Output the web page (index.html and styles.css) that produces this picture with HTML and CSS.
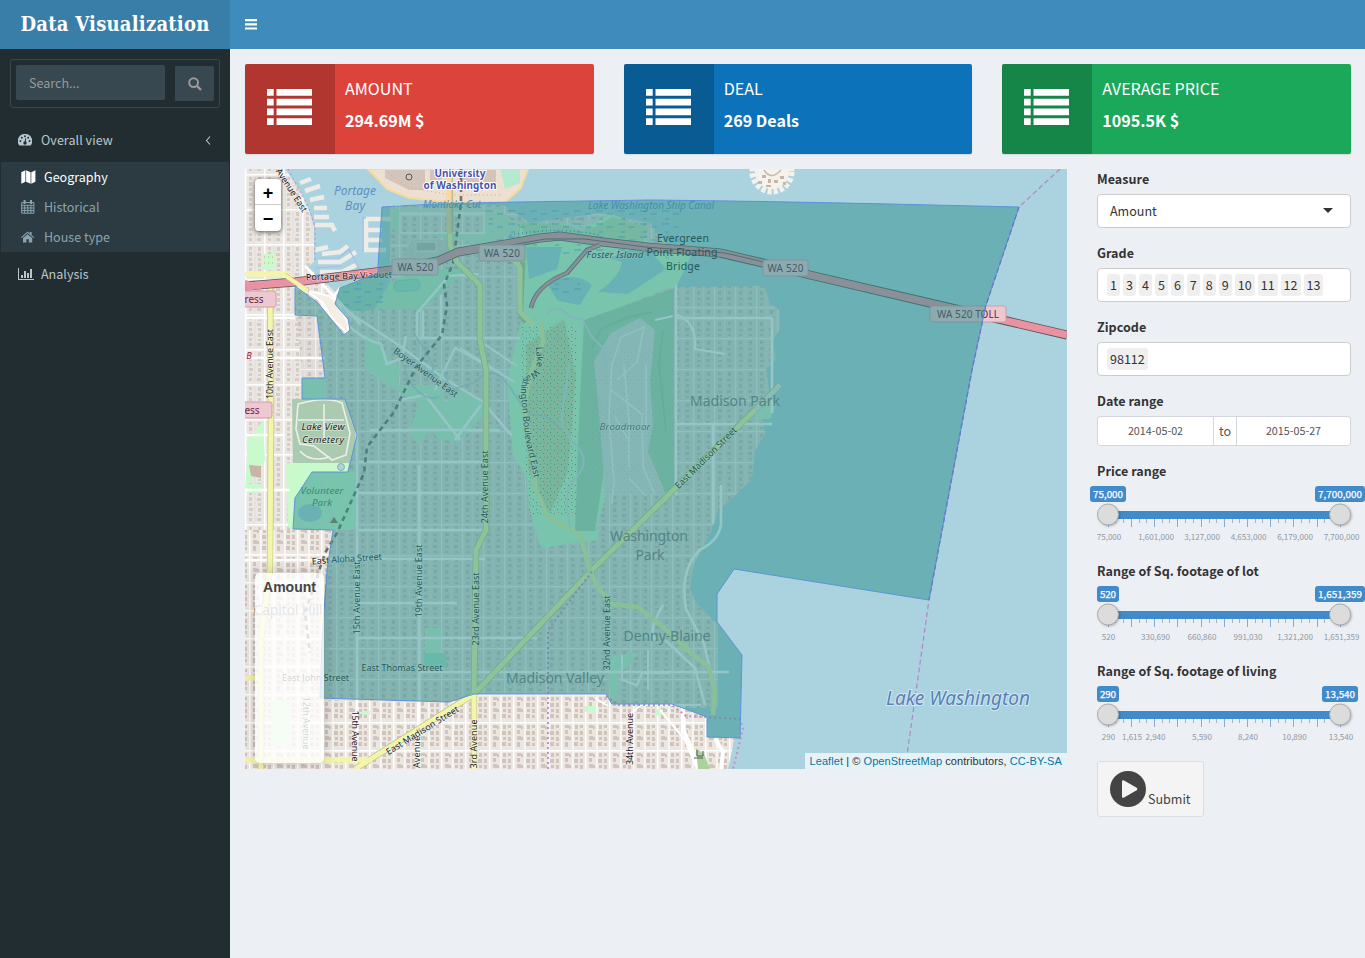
FILE: index.html
```html
<!DOCTYPE html>
<html lang="en">
<head>
<meta charset="utf-8">
<title>Data Visualization</title>
<link rel="stylesheet" href="styles.css">
</head>
<body>
<header class="header">
  <div class="logo">Data Visualization</div>
  <div class="navbar"><svg width="12" height="11" viewBox="0 0 12 11"><path d="M0 0h12v2.2H0zM0 4.2h12v2.2H0zM0 8.4h12v2.2H0z" fill="#fff"/></svg></div>
</header>
<div class="wrapper">
  <aside class="sidebar">
    <form class="search">
      <div class="search-input">Search...</div>
      <div class="search-btn"><svg width="14" height="14" viewBox="0 0 14 14" fill="none" stroke="#999" stroke-width="2"><circle cx="5.6" cy="5.6" r="4.4"/><path d="M9 9l4 4" stroke-width="2.4"/></svg></div>
    </form>
    <nav class="menu">
      <div class="item"><svg width="14" height="12" viewBox="0 0 14 12"><path d="M7 0a7 7 0 0 0-6 11q.3.6.8.6h10.4q.5 0 .8-.6A7 7 0 0 0 7 0z" fill="#b8c7ce"/><g fill="#222d32"><circle cx="2.4" cy="7" r=".95"/><circle cx="3.8" cy="3.7" r=".95"/><circle cx="7" cy="2.3" r=".95"/><circle cx="10.2" cy="3.7" r=".95"/><circle cx="11.6" cy="7" r=".95"/><circle cx="7" cy="9" r="1.7"/><path d="M6.4 9l1-5 .8.2-.6 5z"/></g></svg><span class="wide">Overall view</span><svg class="angle" width="6" height="9" viewBox="0 0 6 9"><path d="M5 .5L1.500 4.500 5 8.500" fill="none" stroke="#b8c7ce" stroke-width="1.1"/></svg></div>
      <div class="submenu">
        <div class="item active"><svg width="15" height="14" viewBox="0 0 15 14" fill="#fff"><path d="M.3 2.2L4.4.3v11.4L.3 13.7zM5.1.3l4.5 2v11.4l-4.5-2zM10.3 2.3L14.4.2v11.5l-4.1 2z"/></svg><span>Geography</span></div>
        <div class="item"><svg width="14" height="14" viewBox="0 0 14 14" fill="none" stroke="#8aa4af"><path d="M.7 2.5h12.2v10.7H.7zM.7 5.3h12.2M.7 8h12.2M.7 10.6h12.2M3.7 5v8M6.8 5v8M9.9 5v8"/><path d="M3.6 0v4M10 0v4" stroke-width="2"/></svg><span>Historical</span></div>
        <div class="item"><svg width="14" height="12" viewBox="0 0 14 12" fill="#8aa4af"><path d="M0 6.3L6.6.6l2.2 1.8V1h1.8v3l2.7 2.3-.7.8-6-5-5.9 5z"/><path d="M2 7l4.6-3.8L11.2 7v4.5H7.8V8.2H5.4v3.3H2z"/></svg><span>House type</span></div>
      </div>
      <div class="item tight"><svg width="16" height="12" viewBox="0 0 16 12" fill="#b8c7ce"><path d="M0 0h1v11h15v1H0zM3 7h2v3H3zM6 3h2v7H6zM9 5h2v5H9zM12 1h2v9h-2z"/></svg><span>Analysis</span></div>
    </nav>
  </aside>
  <main class="content">
    <svg class="defs" width="0" height="0">
      <symbol id="list" viewBox="0 0 45 36"><g fill="#fff"><path d="M0 0h6.7v6.8H0zM0 9.8h6.7v6.8H0zM0 19.5h6.7v6.8H0zM0 29.2h6.7V36H0zM9.5 0H45v6.8H9.5zM9.5 9.8H45v6.8H9.5zM9.5 19.5H45v6.8H9.5zM9.5 29.2H45V36H9.5z"/></g></symbol>
      <g id="track">
        <path d="M18.5 33v4M26.5 33v4M42.5 33v4M49.5 33v4M65.5 33v4M72.5 33v4M88.5 33v4M96.5 33v4M112.5 33v4M119.5 33v4M135.5 33v4M142.5 33v4M158.5 33v4M165.5 33v4M181.5 33v4M188.5 33v4M204.5 33v4M212.5 33v4M227.5 33v4" stroke="#aab3bb"/>
        <path d="M34.5 33v8M57.5 33v8M80.5 33v8M104.5 33v8M127.5 33v8M150.5 33v8M173.5 33v8M196.5 33v8M220.5 33v8M11.5 36v5M243.5 36v5" stroke="#86acd3"/>
        <rect x="11" y="25" width="232" height="8" fill="#428bca"/>
        <circle class="knob" cx="11" cy="28.5" r="10.5"/><circle class="knob" cx="243" cy="28.5" r="10.5"/>
      </g>
    </svg>
    <section class="boxes">
      <div class="box red"><div class="box-icon"><svg width="45" height="36"><use href="#list"/></svg></div><div class="box-text"><span>AMOUNT</span><b>294.69M $</b></div></div>
      <div class="box blue"><div class="box-icon"><svg width="45" height="36"><use href="#list"/></svg></div><div class="box-text"><span>DEAL</span><b>269 Deals</b></div></div>
      <div class="box green"><div class="box-icon"><svg width="45" height="36"><use href="#list"/></svg></div><div class="box-text"><span>AVERAGE PRICE</span><b>1095.5K $</b></div></div>
    </section>
    <section class="columns">
      <div class="map">
        <svg class="tiles" width="822" height="600" viewBox="245 169 822 600">
          <defs>
            <pattern id="blocks" width="19" height="35" patternUnits="userSpaceOnUse" patternTransform="translate(245 174)">
              <rect width="19" height="35" fill="#eae6e1"/>
              <path d="M4 3h3v3H4zM4 8h3v4H4zM4 14h3v3H4zM4 19h4v3H4zM4 24h3v3H4zM4 29h3v3H4zM13 3h3v4h-3zM12 9h4v3h-4zM13 14h3v3h-3zM13 19h3v4h-3zM13 25h3v2h-3zM12 29h4v3h-4z" fill="#d5ccc5"/>
              <path d="M0 0v35M0 0h19" stroke="#fff" stroke-width="3"/><path d="M10 2v31" stroke="#ddd6ce" stroke-width=".6"/>
            </pattern>
            <pattern id="inner" width="21" height="31" patternUnits="userSpaceOnUse" patternTransform="translate(357 307)">
              <rect width="21" height="31" fill="#dedbd8"/>
              <path d="M4 3h3v3H4zM4 9h4v3H4zM4 15h3v4H4zM4 22h4v2H4zM4 27h3v2H4zM14 3h3v4h-3zM13 10h4v2h-4zM14 15h3v3h-3zM13 21h4v3h-4zM14 27h3v2h-3z" fill="#cac3be"/>
              <path d="M0 0v31M0 0h21" stroke="#f2f2f2" stroke-width="2.6"/><path d="M10.500 2v28" stroke="#e8e6e4" stroke-width=".8"/>
            </pattern>
            <pattern id="dense" width="24" height="28" patternUnits="userSpaceOnUse" patternTransform="translate(249 694)">
              <rect width="24" height="28" fill="#ebe6e0"/>
              <path d="M4 3h4v3H4zM4 8h3v4H4zM4 14h4v4H4zM4 20h3v5H4zM8 4h2v3H8zM8 15h2v3H8zM14 3h3v4h-3zM13 9h4v4h-4zM14 15h3v3h-3zM13 20h4v4h-4zM19 3h3v3h-3zM19 9h3v4h-3zM19 15h3v4h-3zM19 21h3v3h-3z" fill="#d0c4bc"/>
              <path d="M0 0v28M0 0h24" stroke="#fff" stroke-width="3"/><path d="M12 1v27" stroke="#fff" stroke-width="1.2"/>
            </pattern>
            <pattern id="dots" width="7" height="7" patternUnits="userSpaceOnUse"><path d="M1 2h1v1H1zM4 5h1v1H4z" fill="#70906a"/><path d="M5 1h1v1H5z" fill="#e08f84"/></pattern>
            <pattern id="marsh" width="22" height="13" patternUnits="userSpaceOnUse"><path d="M2 3h7M13 6h6M5 11h4" stroke="#5aa2dd" stroke-width=".8"/></pattern>
            <path id="boulevard" d="M536 347l1 16q-1 8-10 13-7 3-6 20l4 40 9 42"/>
          </defs>
          <rect x="245" y="169" width="822" height="600" fill="#aad3df"/>
          <!-- land masses -->
          <path d="M245 169h40l14 20 9 18 6 20v35l-6 5 32 29 25 18v206h-40v179h-80z" fill="url(#blocks)"/>
          <path d="M295 286l30 26 22 22 8-24h35V205h113l27 18 70-10 50 10 20 25-10 35 17 4 87-1 6 17 10 8v18l-8 12 4 18-10 10 4 25-8 20 3 20-10 17-3 28-12 12-22 20-8 23-16 30-4 25 6 14 22 22v83H320l-2-150 35-70-10-60-41-50z" fill="url(#inner)"/>
          <path d="M245 700h80l124 2 25-8h132l6 10h60l35 13 1 20h27l-7 32H245z" fill="url(#dense)"/>
          <path d="M245 530h88l-6 38-6 132h-76z" fill="url(#dense)"/>
          <path d="M368 169l19 20 22 9 41 4h55l16-14 7-19z" fill="#eee0d0" stroke="#f3dc9a" stroke-width="2"/>
          <path d="M385 170h40v20h-16l-24-12zM460 170h36v12h-36zM430 170h12v14h-12z" fill="#d3c5bb"/><path d="M388 173l20 14 42 8h50" stroke="#ef9a79" stroke-dasharray="1 3" fill="none"/><circle cx="409" cy="177" r="3" fill="none" stroke="#555"/>
          <path d="M500 169h20v14l-15 6z" fill="#b6ead0"/>
          <g stroke="#eeece7" stroke-width="4.5" fill="none"><path d="M300 183l11-4M305 191l15-5M310 200l14-3M314 208h13M314 217h15M315 225h17l3 6M315 250l13-3M318 262h22l16-10M320 272h22l14-7M322 254l18-2 8-6M366 219v31h20M366 230h16M366 240h16M366 219h30"/></g>
          <path d="M363 217v35M319 258h20l10-9 10 19-20 12M315 268l26-2" stroke="#a8bdea" stroke-width="1.2" fill="none"/>
          <circle cx="772" cy="172" r="17" fill="#f5f1eb"/><circle cx="772" cy="172" r="19" fill="none" stroke="#f5f1eb" stroke-width="7" stroke-dasharray="4 2"/><g fill="#c5b6ac"><path d="M762 175h4v3h-4zM768 179h3v4h-3zM774 180h4v3h-4zM780 176h4v3h-4zM758 181h4v3h-4zM766 185h5v2h-5zM783 182h3v3h-3z"/></g><path d="M764 170q7 11 17 0" stroke="#c5bbb3" stroke-width="1.5" fill="none"/>
          <!-- parks, marsh and golf course -->
          <path d="M391 210h110l22 20-38 14-94-15z" fill="#c6e9cd"/><path d="M400 213h84v20h-84z" fill="url(#inner)" stroke="#eee" stroke-width="2"/>
          <path d="M412 240h40l-8 25-50 6z" fill="#d5d3d0"/><path d="M416 242h20v9h-20z" fill="#c1bbb5" stroke="#e6e6e6"/>
          <path d="M374 310l16-28 30-13h50l-20 16-28 25z" fill="#bdedc7"/><rect x="394" y="280" width="26" height="11" rx="5" fill="#a5e5c8" stroke="#94d9ba" transform="rotate(-6 407 285)"/>
          <path d="M341 284l44-12-3 27-15 12h-15l-17-10z" fill="#a8d6c9"/><path d="M341 280h45v30h-45z" fill="url(#marsh)"/>
          <path d="M520 223l70 2 21-12 32 18 5 15 45 6-16 33-70 27 30 60-40 168-56 8-12-40-2-30-14-22-6-75 14-60-4-20z" fill="#c8facc"/>
          <path d="M520 222l75 5 17-10 35 10-5 23-60-12-55 4z" fill="#bee3b7"/><path d="M480 208h200v50h-70l-100 10z" fill="url(#marsh)"/>
          <path d="M526 247h36l-5 22-28 10zM548 285q25-16 44 0l-12 20-22-4zM610 258l34-14 22 25-38 25-30-2q22-15 24-30z" fill="#a7d5dc"/>
          <path d="M548 286q23-15 36-4l-5 14h-25z" fill="url(#marsh)"/>
          <path d="M584 320l90-32v204h-12l-25-42h-30l-12 81h-20l4-114z" fill="#add9b5"/>
          <path d="M611 333l29-15 15 12-5 52 3 42-5 28 16 37v5h-60v-15l-6-78-4-40z" fill="#dddedd"/>
          <path d="M606 494h62v36h-72z" fill="url(#inner)"/>
          <g stroke="#9bd0a6" fill="none" stroke-width="2"><path d="M592 348l9-19 28-12 23-5M663 330l-4 36 7 65"/></g>
          <g stroke="#f4f4f4" fill="none" stroke-width="1.6"><path d="M612 365l9-28 23-10-7 35-20 18M612 362l-3 55 5 65-2 22M611 390l31 24 1 53 12 28M624 365l5 55v48M615 417l14 24M629 478l17 18M646 365v60"/></g>
          <path d="M526 345l38-26 12 56-8 97-20 46-20-50z" fill="#c8dfb1"/>
          <path d="M520 325h56v190h-48z" fill="url(#dots)"/><path d="M587 350h78v145h-88z" fill="url(#dots)" opacity=".2"/>
          <g fill="none" stroke="#d4dfe4" stroke-width="1.8"><path d="M569 365l-7 50q-2 12 12 28 20 18-1 38-12 12-1 52M546 314q12-12 24 3l12 2 10 18 12 12 2 24"/></g>
          <path d="M302 379h23v20h-23zM365 330l36 40-5 15 45 0 6 25-28 35-10-13 10-28-54-34zM462 390l30 18-35 35-20-5-8-15 18-22zM425 628h16v28h-16zM637 652l-5 12-14 8v30l-8-5-2-40zM758 401h20l-8 18h-14z" fill="#c8f0d0"/>
          <path d="M424 653h22v14h-22z" fill="#a5e5c8"/>
          <path d="M292 399h53l12 36-9 37h-55z" fill="#aacbaf"/><path d="M298 404q28-8 44-1l8 30-4 22-14 5-18-14-14-2-4-15zM324 404v40M298 420h46M300 451q10 12 30 6" fill="none" stroke="#eee" stroke-width="1.6"/>
          <path d="M286 463h63l-2 10h-35l-16 24-3 32-5-2z" fill="#c8facc"/><circle cx="341" cy="467" r="3.5" fill="#b5d0d0" stroke="#7eb2c8"/>
          <path d="M312 472h43v58h-62l2-32z" fill="#c8facc"/><ellipse cx="310" cy="513" rx="12" ry="9" fill="#aad3df"/><path d="M319 473l14 48M295 500q-2 30 15 28 15-8 28-6" fill="none" stroke="#dce8e2" stroke-width="1.8"/><path d="M330 523l4-6 4 6z" fill="#8d7850"/>
          <path d="M263 254h13v16h-13zM248 440l15-20 2 40-20 30zM247 484h15v9h-15zM272 700h18v46h-18zM362 711h8v4h-8zM585 706h10v6h-10zM655 709h8v6h-8z" fill="#c8facc"/><path d="M264 257h11M264 263h11" stroke="#e2978b" stroke-dasharray="1 3"/>
          <path d="M249 465l12 1v12l-10-2z" fill="#c9b5a8"/>
          <!-- minor streets -->
          <g stroke="#fff" stroke-width="2.6" fill="none"><path d="M305 266l56 59M340 288l-13 18 21 18M345 310l55 36 45 33 37 22 30 35M319 294q6 26 25 28 19 18 37 22l6 20 15-6 4-22M417 338h103M417 338v-25l32-37 30-2M423 310v28M441 295v43M357 431v325M419 465v300M370 430h130M357 462h125M357 493h125M357 530h125M330 559h155M357 603h100M357 638h180M419 672h310M245 435h40M245 490h45M245 560h75M245 318h50M245 358h80M400 400l25-5 35 45M455 440l26-35M676 285v210M772 318v95M676 318h96M676 424h96M713 424v100M721 485v40q-3 16-20 24-22 20-15 60l18 35 10 42M665 640l30 28 10 37M663 605q-15 25-8 35"/></g>
          <g stroke="#fff" stroke-width="2" fill="none"><path d="M435 390l20-42 60 34M460 348l45 28M475 338l42 28M655 320l18-4M675 314q22 7 20 35l30 5M622 655v25l15 5 5-12h28M648 650v40M608 706l-13-8M629 715l12-10h60M660 710l25 30 12 29"/></g>
          <path d="M683 706l1 25 16 38M715 738l8 14-2 17" fill="none" stroke="#fff" stroke-width="4"/><path d="M696 748l8 6 6 15h-12z" fill="#a9d39b"/><path d="M694 758h9M697 750v6h6v-5" fill="none" stroke="#555"/>
          <path d="M413 332q35 50 9 38t-12 12q14 20 29 15M444 372l7 18 25-8q15-20 33 4l19 28 17 2 17 14" stroke="#b8c8d5" stroke-width="2" fill="none" opacity=".7"/>
          <path d="M293 287l14 4 16 12 8 14 16 16 2-8-12-24-8-5z" fill="#f4efe5" stroke="#fff" stroke-width="2"/>
          <!-- rail line -->
          <path d="M461 169v34l-8 60-9 22 3 20-5 30-26 32-22 45-27 35-3 26-27 60-12 20-10 30-10 30 5 40" stroke="#555" stroke-width="2.6" stroke-dasharray="5 4" fill="none" opacity=".8"/>
          <!-- main roads -->
          <g fill="none" stroke="#bac58b" stroke-width="6.4"><path d="M474 769v-75l2-144 10-20V370l-6-30v-55l-23-23-7-17v-76M355 769l119-75 116-122 190-187M270 280l1 145-1 144-9 70v130M522 262l-2 50 6 10"/></g>
          <g fill="none" stroke="#f3f6a8" stroke-width="5"><path d="M474 769v-75l2-144 10-20V370l-6-30v-55l-23-23-7-17v-13M355 769l119-75 116-122 165-162M270 280l1 145-1 144-9 70v130M245 274h41l19 16M245 760h127M245 678h15M510 259q12 4 10 15v38l14 14"/></g>
          <path d="M755 410l25-25" stroke="#e9e9e9" stroke-width="5"/>
          <path d="M449 169v65" stroke="#fcd6a4" stroke-width="5"/>
          <path d="M541 322l2 20-12 30-7 33 10 65 2 20 12 27 32 18 10 35 6 14 15 20 27 3 25 20 25 24 20 15 7 25-2 24" fill="none" stroke="#e7f3a5" stroke-width="4.5"/><circle cx="684" cy="647" r="5" fill="#e7f3a5"/>
          <g fill="none"><path d="M245 286l50-4 97-12 46-9 20-9 42-7 40-7 20-2 43 6 44 5 73 6 43 10 47 12 120 28 77 18 60 14" stroke="#555" stroke-width="9"/><path d="M245 286l50-4 97-12 46-9 20-9 42-7 40-7 20-2 43 6 44 5 73 6 43 10 47 12 120 28 77 18 60 14" stroke="#e892a2" stroke-width="7.4"/><path d="M495 248l50-9h40l60 8 80 6 60 14" stroke="#77505b" stroke-width="1"/><path d="M531 308q4-22 36-35l20-23 13-5" stroke="#8b6170" stroke-width="4.5"/><path d="M531 308q4-22 36-35l20-23 13-5" stroke="#e892a2" stroke-width="2.5"/></g>
          <path d="M245 281l16 8M245 291l20-7M285 274l24 17" stroke="#e892a2" stroke-width="3"/><path d="M283 274l25 17" stroke="#f3f6a8" stroke-width="4"/>
          <path d="M510 235q50-9 90 0" stroke="#4b7ee8" stroke-dasharray="1 3" fill="none" stroke-width="1.5"/><path d="M569 224l13 6 8-10 8 1" stroke="#d8e3df" stroke-width="3" fill="none"/>
          <g fill="none" stroke="#c88cd0" stroke-dasharray="2 3" stroke-width="2"><path d="M548 769V630l45-60M606 696l12 9h54l14 11 54 3 3 10-10 40"/></g>
          <path d="M1060 169l-41 38-33 98-14 65-43 230-22 155" fill="none" stroke="#ae87c4" stroke-width="1.2" stroke-dasharray="5 3"/>
          <path d="M288 169l20 37 7 20v35" fill="none" stroke="#b78bcc" stroke-dasharray="2 3"/>
          <g class="place"><text x="683" y="242" textLength="52">Evergreen</text><text x="682" y="256" textLength="71">Point Floating</text><text x="683" y="270" textLength="34">Bridge</text></g>
          <g class="shield"><rect x="240" y="291" width="36" height="16" rx="2"/><rect x="240" y="402" width="32" height="16" rx="2"/><rect x="392" y="259" width="46" height="16" rx="2"/><rect x="479" y="245" width="46" height="16" rx="2"/><rect x="763" y="260" width="45" height="16" rx="2"/><rect x="930" y="306" width="76" height="16" rx="2"/>
            <text x="254" y="303" textLength="19">ress</text><text x="252" y="414" textLength="15">ess</text><text x="415.500" y="270.500" textLength="36">WA 520</text><text x="502" y="256.500" textLength="36">WA 520</text><text x="785.500" y="271.500" textLength="36">WA 520</text><text x="968" y="317.500" textLength="62">WA 520 TOLL</text></g>
          <g class="street">
            <text transform="translate(289 192) rotate(57)" textLength="50">Avenue East</text>
            <text transform="translate(349 279) rotate(-2)" textLength="86">Portage Bay Viaduct</text>
            <text transform="translate(424 375) rotate(36)" textLength="77">Boyer Avenue East</text>
            <text transform="translate(273 364) rotate(-90)" textLength="70">10th Avenue East</text>
            <text transform="translate(488 487) rotate(-90)" textLength="73">24th Avenue East</text>
            <text transform="translate(479 609) rotate(-90)" textLength="73">23rd Avenue East</text>
            <text transform="translate(422 581) rotate(-90)" textLength="73">19th Avenue East</text>
            <text transform="translate(360 598) rotate(-90)" textLength="73">15th Avenue East</text>
            <text transform="translate(610 633) rotate(-90)" textLength="75">32nd Avenue East</text>
            <text transform="translate(633 739) rotate(-90)" textLength="52">34th Avenue</text>
            <text transform="translate(477 744) rotate(-90)" textLength="49">3rd Avenue</text>
            <text transform="translate(420 752) rotate(-90)" textLength="32">Avenue</text>
            <text transform="translate(352 736) rotate(90)" textLength="51">15th Avenue</text>
            <text transform="translate(303 723) rotate(90)" textLength="53">12th Avenue</text>
            <text class="along"><textPath href="#boulevard">Lake Washington Boulevard East</textPath></text>
            <text transform="translate(708 460) rotate(-45)" textLength="83">East Madison Street</text>
            <text transform="translate(424 733) rotate(-32)" textLength="84">East Madison Street</text>
            <text transform="translate(347 562) rotate(-4)" textLength="70">East Aloha Street</text>
            <text x="402" y="671" textLength="81">East Thomas Street</text><text x="315.500" y="681" textLength="67">East John Street</text>
          </g>
          <g class="italic"><text x="615" y="258" textLength="57">Foster Island</text><text x="625" y="430" textLength="51" opacity=".65">Broadmoor</text><text x="323" y="430" textLength="43">Lake View</text><text x="323" y="443" textLength="42">Cemetery</text><g class="parkname"><text x="322" y="494" textLength="43">Volunteer</text><text x="322" y="506" textLength="20">Park</text></g></g>
          <g class="suburb"><text x="735" y="406" textLength="90">Madison Park</text><text x="649" y="541" textLength="78">Washington</text><text x="650" y="560" textLength="29">Park</text><text x="667" y="641" textLength="87">Denny-Blaine</text><text x="555" y="683" textLength="98">Madison Valley</text><text x="288" y="615" textLength="69">Capitol Hill</text></g>
          <g class="water"><text x="355" y="195" textLength="42" class="bay">Portage</text><text x="355" y="210" textLength="20" class="bay">Bay</text><text x="452" y="208" textLength="58">Montlake Cut</text><text x="651" y="209" textLength="126">Lake Washington Ship Canal</text></g>
          <g class="university"><text x="460" y="177" textLength="51">University</text><text x="460" y="188.500" textLength="73">of Washington</text></g>
          <text x="249" y="359" class="bus">B</text>
          <!-- selected zipcode area -->
          <path d="M382 207q60-4 138-5l130-2q100 1 240 4l129 3-33 98-14 65-43 230-195-31-17 25v28l25 33-2 83-33-1v-20l-35-13h-60l-6-10H474l-25 8-129-4 2-58 5-70 6-40-40-1 2-31 17-26h36l9-37-12-36h-43v-21h23l-8-62-22-1v-29l23 17 26 32 6-5-2-11-13-15 5-16 38-15v-7z" fill="#2a8d8b" fill-opacity=".5" stroke="#5d93d8" stroke-width="1"/>
          <path d="M1019 207l-33 98-14 65-43 230" fill="none" stroke="#6a78c4" stroke-width="1.2" stroke-dasharray="5 3"/>
          <g class="water"><text x="958" y="705" textLength="144" class="lake">Lake Washington</text></g>
        </svg>
        <div class="zoom"><span>+</span><span>−</span></div>
        <div class="legend">Amount</div>
        <div class="credit"><a>Leaflet</a> | © <a>OpenStreetMap</a> contributors, <a>CC-BY-SA</a></div>
      </div>
      <div class="controls">
        <label>Measure</label><div class="field select"><span>Amount</span><i class="caret"></i></div>
        <label>Grade</label><div class="field tags"><span>1</span><span>3</span><span>4</span><span>5</span><span>6</span><span>7</span><span>8</span><span>9</span><span>10</span><span>11</span><span>12</span><span>13</span></div>
        <label>Zipcode</label><div class="field tags"><span>98112</span></div>
        <label>Date range</label><div class="dates"><span>2014-05-02</span><span class="to">to</span><span>2015-05-27</span></div>
        <label>Price range</label>
        <svg class="slider" width="254" height="76" viewBox="0 0 254 76"><use href="#track"/><g class="badge"><rect x="-7" width="36" height="16" rx="3"/><text x="11" y="12" textLength="30">75,000</text><rect x="218" width="50" height="16" rx="3"/><text x="243" y="12" textLength="44">7,700,000</text></g><g class="scale"><text x="12" y="54">75,000</text><text x="59" y="54">1,601,000</text><text x="105" y="54">3,127,000</text><text x="151.500" y="54">4,653,000</text><text x="198" y="54">6,179,000</text><text x="244.500" y="54">7,700,000</text></g></svg>
        <label>Range of Sq. footage of lot</label>
        <svg class="slider" width="254" height="76" viewBox="0 0 254 76"><use href="#track"/><g class="badge"><rect width="22" height="16" rx="3"/><text x="11" y="12" textLength="16">520</text><rect x="218" width="50" height="16" rx="3"/><text x="243" y="12" textLength="44">1,651,359</text></g><g class="scale"><text x="11.500" y="54">520</text><text x="58.500" y="54">330,690</text><text x="105" y="54">660,860</text><text x="151" y="54">991,030</text><text x="198" y="54">1,321,200</text><text x="244.500" y="54">1,651,359</text></g></svg>
        <label>Range of Sq. footage of living</label>
        <svg class="slider" width="254" height="76" viewBox="0 0 254 76"><use href="#track"/><g class="badge"><rect width="22" height="16" rx="3"/><text x="11" y="12" textLength="16">290</text><rect x="225" width="36" height="16" rx="3"/><text x="243" y="12" textLength="30">13,540</text></g><g class="scale"><text x="11.500" y="54">290</text><text x="35" y="54">1,615</text><text x="58.500" y="54">2,940</text><text x="105" y="54">5,590</text><text x="151" y="54">8,240</text><text x="197.500" y="54">10,890</text><text x="244" y="54">13,540</text></g></svg>
        <div class="submit"><svg width="36" height="36" viewBox="0 0 36 36"><circle cx="18" cy="18" r="18" fill="#444"/><path d="M12 10.500q0-2 2-1l12.700 7.300q1.500 1.200 0 2.400L14 26.500q-2 1-2-1z" fill="#f4f4f4"/></svg><span>Submit</span></div>
      </div>
    </section>
  </main>
</div>
</body>
</html>
```
FILE: styles.css
```css
* { box-sizing: border-box; }
body { margin: 0; height: 958px; overflow: hidden; background: #ecf0f5; color: #333; font: 12.54px/20px "Noto Sans CJK SC", "Open Sans", sans-serif; }
svg { display: block; }
.header { display: flex; height: 49px; background: #3f8cbc; }
.logo { width: 230px; background: #397ea9; color: #fff; text-align: center; font: bold 20px/49px "DejaVu Serif Condensed", "DejaVu Serif", serif; letter-spacing: .25px; white-space: nowrap; }
.navbar { padding: 19px 15px; }
.wrapper { display: flex; height: 909px; }
.sidebar { width: 230px; flex: none; background: #222d32; color: #b8c7ce; padding-top: 10px; }
.search { margin: 0 10px; height: 49px; border: 1px solid #374850; border-radius: 3px; padding: 5px; display: flex; justify-content: space-between; }
.search-input { width: 149px; height: 35px; background: #374850; border-radius: 2px; color: #999; line-height: 35px; padding-left: 13px; }
.search-btn { width: 39px; height: 35px; margin-top: 1px; background: #374850; border-radius: 0 2px 2px 0; display: flex; align-items: center; justify-content: center; }
.menu { padding-top: 10px; }
.item { height: 44px; display: flex; align-items: center; padding: 0 19px 0 18px; gap: 8px; }
.item > svg:first-child { flex: none; }
.item span { white-space: nowrap; }
.item .wide { margin-left: 1px; letter-spacing: .05px; }
.tight { gap: 7px; }
.angle { margin-left: auto; }
.submenu { margin: 0 1px; height: 90px; background: #2c3b41; color: #8aa4af; }
.submenu .item { height: 30px; padding-left: 20px; }
.submenu .item span { margin-left: 1px; }
.submenu .active { color: #fff; }
.submenu .active span { margin-left: 0; }
.content { flex: 1; padding: 15px 14px 0 15px; }
.defs { position: absolute; }
.boxes { display: grid; grid-template-columns: repeat(3, 1fr); gap: 30px; height: 90px; }
.box { display: flex; height: 90px; border-radius: 2px; overflow: hidden; color: #fff; box-shadow: 0 1px 1px rgba(0,0,0,.1); }
.box-icon { width: 90px; padding: 25px 22px; background: rgba(0,0,0,.2); }
.box-text { display: flex; flex-direction: column; padding: 8px 10px; font-size: 16.1px; line-height: 32px; }
.box-text span { font-size: 16.1px; }
.box-text > * { height: 32px; white-space: nowrap; }
.red { background: #dc443b; }
.blue { background: #0c72b9; }
.green { background: #1ba85a; }
.columns { display: flex; gap: 30px; padding-top: 15px; }
.map { position: relative; width: 822px; height: 600px; overflow: hidden; }
.tiles text { text-anchor: middle; font-family: "Noto Sans", "Open Sans", sans-serif; }
.street { font-size: 9px; fill: #222; stroke: #fff; stroke-opacity: .45; stroke-width: 1.5px; paint-order: stroke; }
.tiles .along { text-anchor: start; font-size: 9px; }
.shield rect { fill: #ecc9d1; stroke: #d49aab; stroke-width: 1; }
.shield { font-size: 10px; fill: #6b2443; }
.place { font-size: 10.5px; fill: #222; }
.italic { font-size: 9.8px; font-style: italic; fill: #222; stroke: #fff; stroke-width: 1.5px; stroke-opacity: .5; paint-order: stroke; }
.parkname { fill: #3d8962; stroke: none; }
.suburb { font-size: 14px; fill: #7d7d7d; }
.water { font-size: 10px; font-style: italic; fill: #5e8fc3; }
.bay { font-size: 12px; }
.lake { font-size: 19px; fill: #5681b5; stroke: #d3e7f2; stroke-width: 2px; paint-order: stroke; }
.university { font-size: 10px; font-weight: bold; fill: #4b53ae; stroke: #fff; stroke-width: 2px; paint-order: stroke; }
.bus { font-size: 9px; fill: #a22238; font-style: italic; }
.zoom { position: absolute; left: 10px; top: 10px; width: 26px; height: 52px; background: #fff; border-radius: 4px; box-shadow: 0 1px 5px rgba(0,0,0,.65); color: #000; font: bold 18px/28px "Liberation Sans", sans-serif; text-align: center; }
.zoom span { display: block; height: 26px; }
.zoom span:first-child { border-bottom: 1px solid #ccc; }
.legend { position: absolute; left: 10px; top: 404px; width: 69px; height: 190px; padding-top: 5px; border-radius: 5px; background: rgba(255,255,255,.8); box-shadow: 0 0 15px rgba(0,0,0,.2); color: #444; text-align: center; font: bold 14px/18px "Liberation Sans", sans-serif; }
.credit { position: absolute; right: 0; bottom: 0; width: 262px; height: 16px; padding-left: 4.5px; background: rgba(255,255,255,.7); white-space: nowrap; font: 11px/16px "Liberation Sans", sans-serif; letter-spacing: .07px; }
.credit a { color: #0078a8; }
.controls { width: 254px; flex: none; }
label { display: block; height: 25px; font-weight: bold; white-space: nowrap; letter-spacing: .03px; }
.field { height: 34px; margin-bottom: 15px; border: 1px solid #ccc; border-radius: 4px; background: #fff; display: flex; align-items: center; }
.select { justify-content: space-between; padding: 0 17px 0 12px; }
.caret { border: 5px solid transparent; border-top-color: #333; border-bottom: 0; margin-top: -2px; }
.tags { padding-left: 9px; gap: 3px; }
.tags span { height: 22px; padding: 0 3px; line-height: 22px; border-radius: 3px; background: #efefef; }
.dates { display: grid; grid-template-columns: 115px 24px 1fr; height: 30px; margin-bottom: 15px; border: 1px solid #d2d6de; border-radius: 3px; background: #fff; color: #555; text-align: center; font-size: 10.75px; line-height: 28px; }
.to { border: 1px solid #d2d6de; border-width: 0 1px; font-size: 12.54px; }
.slider { overflow: visible; margin-top: -8px; }
.controls label:has(+ .slider) { height: 33px; }
.slider + label { margin-top: -1px; }
.slider + .submit { margin-top: -1px; }
.knob { fill: #dcdcdc; stroke: #aaa; filter: drop-shadow(1px 1px 1px rgba(0,0,0,.25)); }
.badge { fill: #428bca; font-size: 9.85px; text-anchor: middle; }
.badge text { fill: #fff; stroke: #fff; stroke-width: .25px; }
.scale { fill: #8f99a1; font-size: 8.05px; text-anchor: middle; }
.submit { width: 107px; height: 56px; display: flex; padding: 9px 12px; border: 1px solid #ddd; border-radius: 3px; background: #f4f4f4; color: #444; gap: 2px; white-space: nowrap; }
.submit svg { flex: none; }
.submit span { margin-top: 18px; }
```
